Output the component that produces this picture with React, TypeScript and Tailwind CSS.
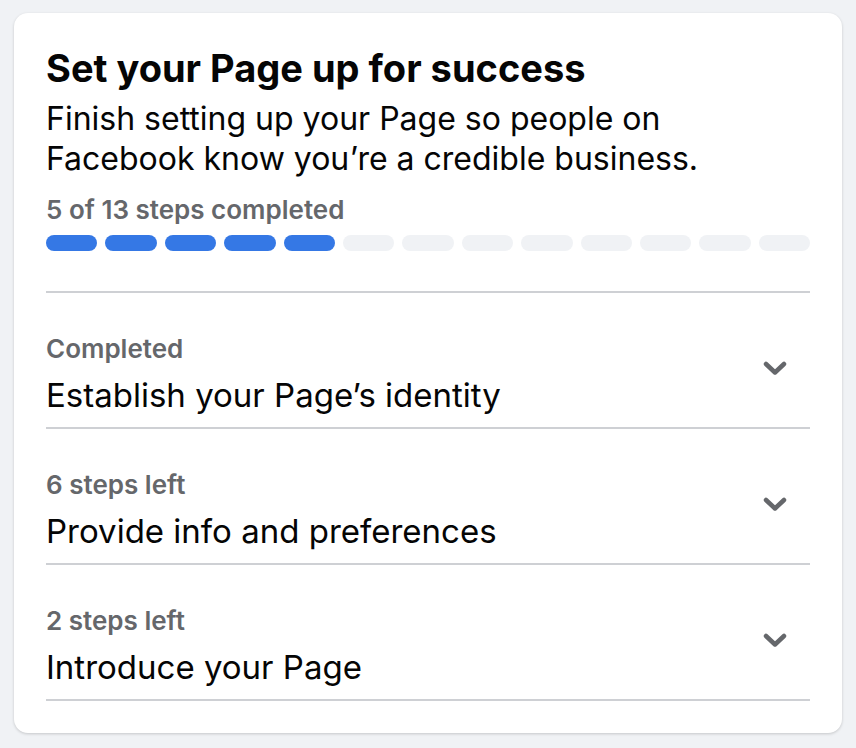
import React from "react";

const sections = [
  { label: "Completed", title: "Establish your Page\u2019s identity" },
  { label: "6 steps left", title: "Provide info and preferences" },
  { label: "2 steps left", title: "Introduce your Page" },
];

function Chevron() {
  return (
    <svg width="24" height="15" viewBox="0 0 24 15" fill="none">
      <path
        d="M3 3 L12 11.5 L21 3"
        stroke="#65676b"
        strokeWidth="4.5"
        strokeLinecap="round"
        strokeLinejoin="round"
      />
    </svg>
  );
}

export default function App() {
  const total = 13;
  const done = 5;
  return (
    <div
      className="min-h-screen bg-[#f0f2f5] px-[14px] pt-[13px]"
      style={{ fontFamily: "Inter, 'Noto Sans', sans-serif" }}
    >
      <div className="w-[828px] h-[720px] bg-white rounded-[14px] shadow-[0_1px_3px_rgba(0,0,0,0.18)] px-8 pt-[33px]">
        <h2 className="text-[38px] leading-[44px] font-bold text-[#050505]">
          Set your Page up for success
        </h2>
        <p className="mt-[9px] text-[32px] leading-[40px] text-[#050505]">
          Finish setting up your Page so people on
          <br />
          Facebook know you’re a credible business.
        </p>
        <div className="mt-[15px] text-[26px] leading-[32px] font-semibold text-[#65676b]">
          5 of 13 steps completed
        </div>
        <div className="mt-[9px] flex gap-2">
          {Array.from({ length: total }).map((_, i) => (
            <div
              key={i}
              className={
                i < done
                  ? "h-4 flex-1 rounded-full bg-[#3578e5]"
                  : "h-4 flex-1 rounded-full bg-[#f0f2f5]"
              }
            />
          ))}
        </div>
        <div className="mt-10 border-t-2 border-[#ced0d4]">
          {sections.map((s) => (
            <div
              key={s.title}
              className="flex items-start justify-between border-b-2 border-[#ced0d4] pt-[40px] h-[136px]"
            >
              <div>
                <div className="text-[26px] leading-[32px] font-semibold text-[#65676b]">
                  {s.label}
                </div>
                <div className="mt-[10px] text-[33px] leading-[40px] text-[#050505]">
                  {s.title}
                </div>
              </div>
              <div className="mr-[23px] mt-[28px] flex">
                <Chevron />
              </div>
            </div>
          ))}
        </div>
      </div>
    </div>
  );
}
